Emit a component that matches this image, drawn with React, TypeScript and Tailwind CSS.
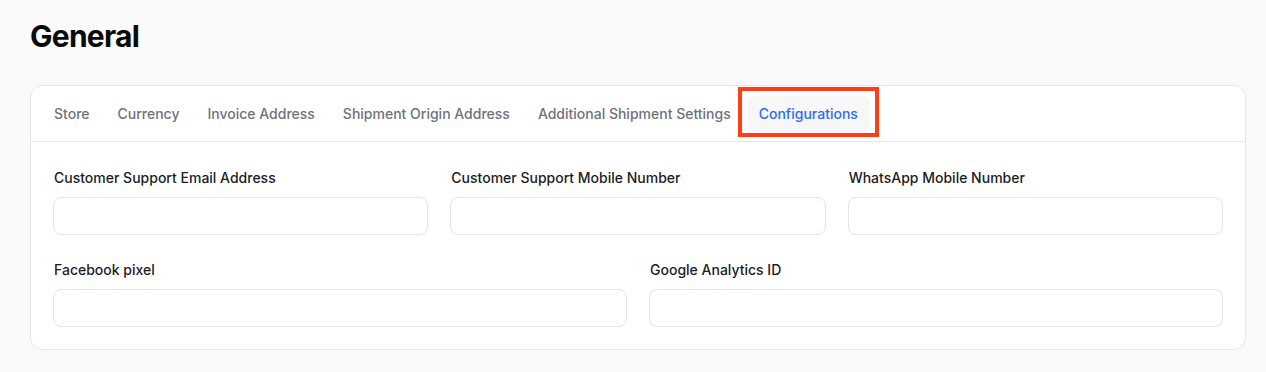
import React, { ReactElement } from 'react'

const tabs = [
  'Store',
  'Currency',
  'Invoice Address',
  'Shipment Origin Address',
  'Additional Shipment Settings',
  'Configurations',
]

const Field: React.FC<{ label: string }> = ({ label }): ReactElement => {
  return (
    <div className="flex flex-col gap-[9px]">
      <label className="pl-px text-sm leading-5 font-medium text-[#1c1c1f]">
        {label}
      </label>
      <input
        type="text"
        className="h-[38px] w-full rounded-lg border border-[#e4e4e7] bg-white px-3 text-sm outline-none"
      />
    </div>
  )
}

const App: React.FC = (): ReactElement => {
  const active = 'Configurations'

  return (
    <div
      className="h-[372px] overflow-hidden bg-[#fafafa] pt-[18px] pr-[20px] pl-[30px]"
      style={{ fontFamily: 'Inter, "Noto Sans", sans-serif' }}
    >
      <h1 className="text-3xl leading-9 font-bold tracking-tight text-[#0a0a0a]">
        General
      </h1>

      <div className="mt-[31px] rounded-xl border border-[#e7e7e9] bg-white">
        <div className="flex h-[56px] items-center gap-1 border-b border-[#e7e7e9] px-[11px]">
          {tabs.map((tab) => {
            const isActive = tab === active
            return (
              <div key={tab} className="relative">
                <button
                  className={
                    isActive
                      ? 'h-9 rounded-lg bg-[#f7f7f8] px-3 text-sm font-medium text-[#2f6bef]'
                      : 'h-9 rounded-lg px-3 text-sm font-medium text-[#71717a]'
                  }
                >
                  {tab}
                </button>
                {isActive && (
                  <div className="pointer-events-none absolute -top-[9px] -right-[9px] -bottom-[5px] -left-[9px] border-[4px] border-[#ff3d17]" />
                )}
              </div>
            )
          })}
        </div>

        <div className="flex flex-col gap-[25px] px-[22px] pt-[26px] pb-[22px]">
          <div className="grid grid-cols-3 gap-x-[22px]">
            <Field label="Customer Support Email Address" />
            <Field label="Customer Support Mobile Number" />
            <Field label="WhatsApp Mobile Number" />
          </div>
          <div className="grid grid-cols-2 gap-x-[22px]">
            <Field label="Facebook pixel" />
            <Field label="Google Analytics ID" />
          </div>
        </div>
      </div>
    </div>
  )
}

export default App
